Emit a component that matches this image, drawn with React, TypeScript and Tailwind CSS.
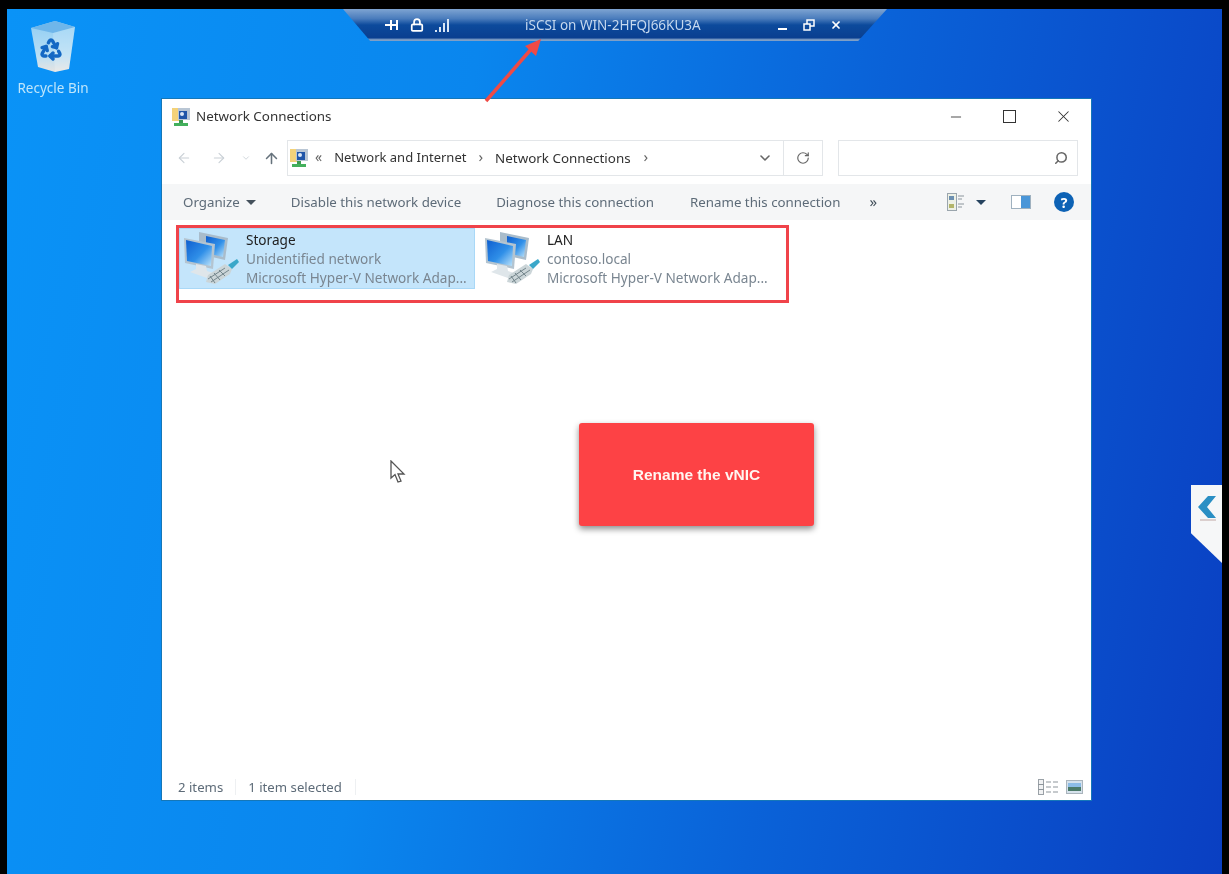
import { ChevronDown, Search, RotateCw, ArrowLeft, ArrowRight, ArrowUp, Minus, X, Lock, Recycle } from "lucide-react";

const font = "font-['Noto_Sans','Open_Sans',sans-serif]";

function FolderNetIcon() {
  return (
    <svg width="20" height="20" viewBox="0 0 20 20" className="shrink-0">
      <rect x="1" y="1" width="10" height="13" fill="#f3d27a" />
      <rect x="7" y="1" width="12" height="12" fill="#b9c6d4" />
      <rect x="8" y="4" width="8" height="8" fill="#1f55a8" />
      <circle cx="11" cy="7" r="2" fill="#dbe7f5" />
      <rect x="8" y="13" width="4" height="3" fill="#3c9a52" />
      <rect x="3" y="16" width="14" height="3" fill="#43b05c" />
    </svg>
  );
}

function NetworkIcon() {
  return (
    <svg width="60" height="58" viewBox="0 0 60 58" className="shrink-0">
      <defs>
        <linearGradient id="screen" x1="0" y1="0" x2="1" y2="1">
          <stop offset="0" stopColor="#0f5fd0" />
          <stop offset="0.55" stopColor="#2f8fe8" />
          <stop offset="1" stopColor="#bfe4fa" />
        </linearGradient>
      </defs>
      <path d="M17 2 L46 8 L43 30 L17 24 Z" fill="#a9bccb" />
      <path d="M24 6 L43 10 L41 27 L24 23 Z" fill="url(#screen)" />
      <path d="M2 8 L33 14 L31 39 L3 33 Z" fill="#b4c4d0" />
      <path d="M4 10 L30 16 L29 36 L5 31 Z" fill="url(#screen)" />
      <path d="M14 34 L24 36 L25 41 L34 44 L25 48 L8 42 L14 39 Z" fill="#dfe6ea" />
      <path d="M24 52 L26 45 L43 34 L50 39 L48 44 L33 54 Z" fill="#cbd5d8" />
      <path d="M28 46 L33 53 M32 43 L38 50 M37 40 L43 46 M26 49 L43 38 M29 52 L47 40" stroke="#74868c" strokeWidth="1" fill="none" />
      <path d="M46 35 L55 29 L57 32 L50 39 Z" fill="#3aa7c9" />
    </svg>
  );
}

function NetItem({ name, status, selected, offset }: { name: string; status: string; selected?: boolean; offset?: boolean }) {
  return (
    <div className={`flex w-[296px] h-[61px] border ${offset ? "pl-[7px]" : "pl-[2px]"} ${selected ? "bg-[#c4e5fb] border-[#a9d8f7]" : "bg-white border-transparent"}`}>
      <div className="w-[64px] pt-[1px]">
        <NetworkIcon />
      </div>
      <div className="flex flex-col text-[13.6px] leading-[19px] mt-[1px]">
        <span className="text-[#222]">{name}</span>
        <span className="text-[#7a8691]">{status}</span>
        <span className="text-[#7a8691] whitespace-nowrap">Microsoft Hyper-V Network Adap...</span>
      </div>
    </div>
  );
}

function ExplorerWindow() {
  return (
    <div className="absolute left-[154px] top-[89px] w-[931px] h-[703px] bg-white border border-[#1577b8] flex flex-col">
      {/* title bar */}
      <div className="h-[35px] flex items-center pl-[9px] shrink-0">
        <FolderNetIcon />
        <span className="ml-[5px] text-[13.4px] text-[#333]">Network Connections</span>
        <div className="ml-auto flex items-center text-[#333] pr-[18px]">
          <Minus size={16} strokeWidth={1.3} />
          <span className="ml-[39px] w-[13px] h-[13px] border-[1.5px] border-[#333]" />
          <X size={19} strokeWidth={1.3} className="ml-[38px]" />
        </div>
      </div>

      {/* address row */}
      <div className="h-[50px] flex items-start pt-[6px] shrink-0">
        <div className="w-[125px] h-[36px] flex items-center pl-[14px] text-[#c9d0d6]">
          <ArrowLeft size={16} strokeWidth={1.6} />
          <ArrowRight size={16} strokeWidth={1.6} className="ml-[19px]" />
          <ChevronDown size={10} strokeWidth={2} className="ml-[14px]" />
          <ArrowUp size={17} strokeWidth={2.2} className="ml-[12px] text-[#66727c]" />
        </div>
        <div className="w-[536px] h-[36px] border border-[#e3e6e9] flex items-center text-[#333]">
          <div className="pl-[1px]">
            <FolderNetIcon />
          </div>
          <span className="ml-[6px] text-[14px] leading-none text-[#666] -mt-[3px]">«</span>
          <span className="ml-[12px] text-[13px]">Network and Internet</span>
          <span className="ml-[12px] text-[15px] leading-none text-[#666] -mt-[3px]">›</span>
          <span className="ml-[12px] text-[13.4px]">Network Connections</span>
          <span className="ml-[13px] text-[15px] leading-none text-[#666] -mt-[3px]">›</span>
          <ChevronDown size={16} strokeWidth={2.4} className="ml-auto mr-[10px] text-[#666]" />
          <div className="w-[39px] h-full border-l border-[#e3e6e9] flex items-center justify-center shrink-0">
            <RotateCw size={14} strokeWidth={2} className="text-[#666]" />
          </div>
        </div>
        <div className="ml-[15px] w-[240px] h-[36px] border border-[#e3e6e9] flex items-center justify-end pr-[9px]">
          <Search size={14} strokeWidth={2.6} className="text-[#666] -scale-x-100" />
        </div>
      </div>

      {/* command bar */}
      <div className="h-[36px] bg-[#f5f6f7] flex items-center pl-[21px] text-[13.3px] text-[#5d6b78] shrink-0">
        <span className="mt-[1px]">Organize</span>
        <span className="ml-[6px] border-x-[5px] border-t-[5px] border-x-transparent border-t-[#44515c]" />
        <span className="ml-[35px] mt-[1px]">Disable this network device</span>
        <span className="ml-[35px] mt-[1px]">Diagnose this connection</span>
        <span className="ml-[36px] mt-[1px]">Rename this connection</span>
        <span className="ml-[29px] text-[15px] text-[#44515c] -mt-[2px]">»</span>
        <div className="ml-auto flex items-center pr-[17px]">
          <svg width="18" height="18" viewBox="0 0 18 18">
            <rect x="0.5" y="0.5" width="9" height="17" fill="#eef1e6" stroke="#9aa5ad" />
            <rect x="2" y="3" width="5" height="4" fill="#6c8fb0" />
            <rect x="2" y="11" width="5" height="4" fill="#b3b56a" />
            <path d="M11 3h6M11 6h4M11 11h6M11 14h4" stroke="#8b959c" strokeWidth="1" />
          </svg>
          <span className="ml-[11px] border-x-[5px] border-t-[5px] border-x-transparent border-t-[#26435f]" />
          <svg width="20" height="14" viewBox="0 0 20 14" className="ml-[25px]">
            <rect x="0.5" y="0.5" width="19" height="13" fill="#fff" stroke="#9fb1bf" />
            <rect x="10" y="1" width="9" height="12" fill="#4a96d8" />
          </svg>
          <div className="ml-[23px] w-[20px] h-[20px] rounded-full bg-[#0d62b5] text-white text-[14px] font-bold flex items-center justify-center">?</div>
        </div>
      </div>

      {/* items */}
      <div className="flex-1 pl-[17px] pt-[8px] flex items-start">
        <NetItem name="Storage" status="Unidentified network" selected />
        <NetItem name="LAN" status="contoso.local" offset />
      </div>

      {/* status bar */}
      <div className="h-[26px] flex items-center pl-[16px] pr-[8px] text-[13.2px] text-[#5d6b78] shrink-0">
        <span className="mt-[2px]">2 items</span>
        <span className="ml-[12px] w-px h-[16px] bg-[#eef0f2]" />
        <span className="ml-[12px] mt-[2px]">1 item selected</span>
        <span className="ml-[13px] w-px h-[16px] bg-[#eef0f2]" />
        <div className="ml-auto flex items-center">
          <svg width="21" height="16" viewBox="0 0 21 16">
            <rect x="0.5" y="0.5" width="5" height="15" fill="#f1f2f3" stroke="#9aa1a7" />
            <path d="M0 5.5h6M0 10.5h6M8 3h5M15 3h5M8 8h5M15 8h5M8 13h5M15 13h5" stroke="#8d959b" strokeWidth="1" />
          </svg>
          <svg width="17" height="14" viewBox="0 0 17 14" className="ml-[7px]">
            <rect x="0.5" y="0.5" width="16" height="13" fill="#d6e2ec" stroke="#aab4bc" />
            <rect x="2" y="3" width="13" height="4" fill="#8cbce6" />
            <rect x="2" y="7" width="13" height="4" fill="#4b7a68" />
          </svg>
        </div>
      </div>
    </div>
  );
}

export default function App() {
  return (
    <div className={`w-[1229px] h-[874px] bg-black pt-[9px] px-[7px] overflow-hidden ${font} [filter:blur(0.45px)]`}>
      <div className="relative w-full h-full overflow-hidden bg-[linear-gradient(100deg,#0a93f7_0%,#0a86ee_35%,#0a62d8_65%,#0a3fc2_100%)]">
        {/* recycle bin */}
        <div className="absolute left-[2px] top-[11px] w-[88px] flex flex-col items-center">
          <svg width="48" height="52" viewBox="0 0 48 52">
            <defs>
              <linearGradient id="bin" x1="0" y1="0" x2="0" y2="1">
                <stop offset="0" stopColor="#8fcdf3" />
                <stop offset="0.65" stopColor="#b6def5" />
                <stop offset="1" stopColor="#e6e4e2" />
              </linearGradient>
            </defs>
            <path d="M2 8 L26 1 L46 7 L40 49 L26 52 L9 47 Z" fill="url(#bin)" />
            <path d="M2 8 L26 1 L46 7 L24 13 Z" fill="#6fb6ea" />
            <path d="M24 13 L46 7 L40 49 L26 52 Z" fill="#ffffff" fillOpacity="0.18" />
            <Recycle x="10" y="17" width="24" height="24" stroke="#1468c4" strokeWidth={3.4} />
          </svg>
          <span className="mt-[7px] text-[13.5px] leading-[18px] text-[#bfe6fb]">Recycle Bin</span>
        </div>

        {/* remote session bar */}
        <div className="absolute left-[336px] top-0 w-[544px] h-[32px] [clip-path:polygon(0_0,100%_0,94.7%_100%,5%_100%)] bg-[linear-gradient(180deg,#7ea4d2_0%,#4a7cbc_30%,#0c4a9c_50%,#0a3f90_90%,#7f9fc6_96%)] flex items-center text-[#c5d8ee]">
          <div className="ml-[42px] flex items-center">
            <span className="w-[13px] h-[2px] bg-white relative">
              <span className="absolute left-[5px] -top-[4px] h-[10px] w-[2px] bg-white" />
              <span className="absolute right-[0px] -top-[4px] h-[10px] w-[2px] bg-white" />
            </span>
            <Lock size={14} strokeWidth={3} className="ml-[12px] text-white" />
            <svg width="14" height="14" viewBox="0 0 14 14" className="ml-[11px]">
              <path d="M0 12h2v2H0zM4 9h2v5H4zM8 5h2v9H8zM12 1h2v13h-2z" fill="#d8e6f5" />
            </svg>
          </div>
          <span className="ml-[76px] text-[13.5px] whitespace-nowrap">iSCSI on WIN-2HFQJ66KU3A</span>
          <div className="ml-[77px] flex items-center text-white">
            <span className="w-[9px] h-[2px] bg-white mt-[7px]" />
            <svg width="12" height="12" viewBox="0 0 12 12" className="ml-[16px]">
              <path d="M1 5h6v6H1zM4 5V1h7v6H7" fill="none" stroke="#fff" strokeWidth="1.5" />
            </svg>
            <X size={12} strokeWidth={3.5} className="ml-[15px]" />
          </div>
        </div>

        <ExplorerWindow />

        {/* arrow annotation */}
        <svg width="70" height="72" viewBox="0 0 70 72" className="absolute left-[474px] top-[26px]">
          <path d="M5 66 L52 12" stroke="#ef4a45" strokeWidth="3.5" fill="none" />
          <path d="M60 4 L55 21 L44 11 Z" fill="#ef4a45" />
        </svg>

        {/* selection annotation */}
        <div className="absolute left-[169px] top-[216px] w-[613px] h-[78px] border-[3px] border-[#f0434a]" />

        {/* callout */}
        <div className="absolute left-[572px] top-[414px] w-[235px] h-[103px] bg-[#fd4245] rounded-[3px] shadow-[0_3px_6px_rgba(0,0,0,0.45)] flex items-center justify-center">
          <span className="font-['Liberation_Sans',sans-serif] font-bold text-[15.5px] text-[#fff5f0]">Rename the vNIC</span>
        </div>

        {/* mouse pointer */}
        <svg width="16" height="24" viewBox="0 0 16 24" className="absolute left-[383px] top-[451px]">
          <path d="M1 1 L1 18 L5 14.5 L8 22 L11 21 L8 14 L14 14 Z" fill="#fff" stroke="#555" strokeWidth="1.3" />
        </svg>

        {/* side tab */}
        <div className="absolute right-0 top-[476px] w-[31px] h-[78px] bg-[#f6f7f8] [clip-path:polygon(0_0,100%_0,100%_100%,0_62%)] flex justify-center pt-[10px]">
          <svg width="20" height="26" viewBox="0 0 20 26">
            <path d="M11 1 L19 1 L10 12 L19 23 L11 23 L1 12 Z" fill="#2a8fc4" />
            <path d="M3 25h16" stroke="#c0a8a4" strokeWidth="1" />
          </svg>
        </div>
      </div>
    </div>
  );
}
